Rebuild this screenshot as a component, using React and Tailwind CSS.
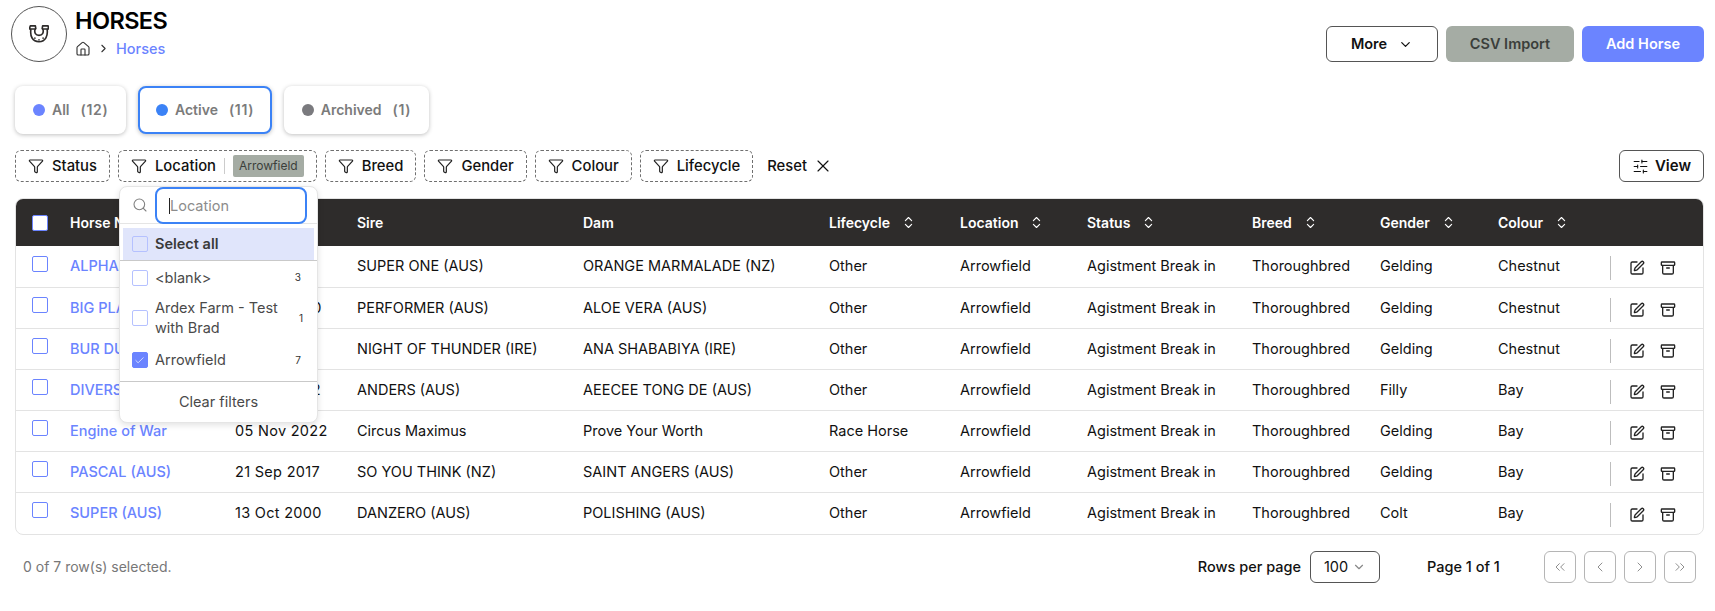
import { Archive, Check, ChevronDown, ChevronLeft, ChevronRight, ChevronsLeft, ChevronsRight, ChevronsUpDown, Funnel, House, Search, SlidersHorizontal, SquarePen, X } from 'lucide-react'

const rows = [
  ['ALPHA', '', 'SUPER ONE (AUS)', 'ORANGE MARMALADE (NZ)', 'Other', 'Gelding', 'Chestnut'],
  ['BIG PLANS', '10 Oct 2020', 'PERFORMER (AUS)', 'ALOE VERA (AUS)', 'Other', 'Gelding', 'Chestnut'],
  ['BUR DUBAI', '10 Oct 2021', 'NIGHT OF THUNDER (IRE)', 'ANA SHABABIYA (IRE)', 'Other', 'Gelding', 'Chestnut'],
  ['DIVERSE', '12 Oct 2022', 'ANDERS (AUS)', 'AEECEE TONG DE (AUS)', 'Other', 'Filly', 'Bay'],
  ['Engine of War', '05 Nov 2022', 'Circus Maximus', 'Prove Your Worth', 'Race Horse', 'Gelding', 'Bay'],
  ['PASCAL (AUS)', '21 Sep 2017', 'SO YOU THINK (NZ)', 'SAINT ANGERS (AUS)', 'Other', 'Gelding', 'Bay'],
  ['SUPER (AUS)', '13 Oct 2000', 'DANZERO (AUS)', 'POLISHING (AUS)', 'Other', 'Colt', 'Bay'],
]

function HorseshoeIcon() {
  return (
    <svg width="20" height="20" viewBox="0 0 22 22" fill="none" stroke="#2d2b2a" strokeWidth="1.8" strokeLinejoin="round">
      <path d="M1.500 2h5.500l.5 3-1 1.500c-.6 3 .5 6 4.500 6s5.100-3 4.500-6l-1-1.500.5-3H21l.5 3-1.500 1.500c.8 6-1.500 13-9 13S1.200 13 2 6.500L.5 5z" />
      <path d="M1 5.500h6M15 5.500h6" />
      <path d="M6.500 15.500v.1M11 17.500v.1M15.500 15.500v.1" strokeLinecap="round" />
    </svg>
  )
}

function FilterChip({ label, children }) {
  return (
    <div className="h-8 flex items-center gap-2 px-3 rounded-md border border-dashed border-[#6f6f6f] text-[14.8px] font-medium text-[#111] whitespace-nowrap">
      <Funnel size={16} strokeWidth={1.8} className="text-[#222]" />
      <span>{label}</span>
      {children}
    </div>
  )
}

function Tab({ dot, label, count, active }) {
  return (
    <div className={`h-12 flex items-center gap-[7px] rounded-lg bg-white shadow-[0_1px_4px_rgba(0,0,0,0.25)] text-sm font-semibold text-[#7b7b7b] ${active ? 'border-2 border-[#3b82f6] px-[15.5px]' : 'px-[18px]'}`}>
      <span className={`w-3 h-3 rounded-full ${dot}`} />
      <span>{label}</span>
      <span className="ml-1 tracking-wider">({count})</span>
    </div>
  )
}

function Box({ checked, faint }) {
  return (
    <span className={`w-4 h-4 rounded-[2px] border flex items-center justify-center shrink-0 ${checked ? 'bg-[#6b84ff] border-[#6b84ff]' : faint ? 'border-[#b5c1ff]' : 'border-[#6b84ff]'}`}>
      {checked && <Check size={11} className="text-white" strokeWidth={1.5} />}
    </span>
  )
}

function LocationMenu() {
  return (
    <div className="absolute left-[1px] top-[36px] w-[199px] h-[237px] bg-white rounded-lg border border-[#e5e5e5] shadow-[0_2px_6px_rgba(0,0,0,0.12)] z-10 text-[#4a4a4a]">
      <div className="h-[37px] flex items-center pl-[12px] pr-[10px] gap-[7px] border-b border-[#e5e5e5]">
        <Search size={16} strokeWidth={1.6} className="text-[#808080] shrink-0" />
        <div className="flex-1 h-[37px] rounded-lg border-2 border-[#3b82f6] flex items-center pl-[12px] pt-[1px] text-[#8c8c8c] bg-white"><span className="w-px h-4 bg-[#222]" />Location</div>
      </div>
      <div className="mx-[3px] mt-[4px] h-[32px] bg-[#e0e5fb] flex items-center gap-[7px] px-[9px] font-semibold text-[#3a3a3a]">
        <Box faint />
        Select all
      </div>
      <div className="border-t border-[#c9c9c9] h-[121px] flex flex-col">
        <div className="h-[33px] flex items-center gap-[7px] pl-[12px] pr-4">
          <Box faint />
          <span className="flex-1">&lt;blank&gt;</span>
          <span className="text-[10px] text-[#333]">3</span>
        </div>
        <div className="h-[48px] flex items-center gap-[7px] pl-[12px] pr-[14px]">
          <Box faint />
          <span className="flex-1 leading-5">Ardex Farm - Test with Brad</span>
          <span className="text-[10px] text-[#333]">1</span>
        </div>
        <div className="h-[36px] flex items-center gap-[7px] pl-[12px] pr-4">
          <Box checked />
          <span className="flex-1">Arrowfield</span>
          <span className="text-[10px] text-[#333]">7</span>
        </div>
      </div>
      <div className="border-t border-[#c9c9c9] h-[41px] flex items-center justify-center">Clear filters</div>
    </div>
  )
}

function SortHead({ label }) {
  return (
    <th className="text-left font-semibold text-sm p-0">
      <div className="flex items-center gap-[11px]">
        {label}
        <ChevronsUpDown size={15} strokeWidth={1.8} />
      </div>
    </th>
  )
}

function PagerButton({ children }) {
  return (
    <div className="w-8 h-8 rounded-md border border-[#b5b5b5] flex items-center justify-center text-[#8f8f8f]">
      {children}
    </div>
  )
}

export default function App() {
  return (
    <div className="w-[1715px] h-[611px] overflow-hidden bg-white pl-[15px] pr-[11px] pt-[6px] text-[14.5px] text-[#111] font-['Inter',sans-serif]">
      {/* Header */}
      <div className="flex items-start justify-between">
        <div className="flex gap-[8px] -ml-1">
          <div className="w-[56px] h-[56px] rounded-full border border-[#555] flex items-center justify-center">
            <HorseshoeIcon />
          </div>
          <div>
            <h1 className="text-[23.5px] leading-7 font-semibold text-black tracking-tight mt-[1px]">HORSES</h1>
            <div className="flex items-center gap-[6px] mt-[3px] font-medium text-[#6b84ff]">
              <House size={16} strokeWidth={1.7} className="text-[#333]" />
              <ChevronRight size={13} className="text-[#333]" />
              <span>Horses</span>
            </div>
          </div>
        </div>
        <div className="flex gap-2 mt-5 font-semibold">
          <div className="w-[112px] h-9 rounded-md border border-[#555] flex items-center justify-center gap-[11px]">
            More
            <ChevronDown size={15} />
          </div>
          <div className="w-[128px] h-9 rounded-md bg-[#a5aca4] text-[#3b3f3b] flex items-center justify-center">CSV Import</div>
          <div className="w-[122px] h-9 rounded-md bg-[#6b84ff] text-white flex items-center justify-center">Add Horse</div>
        </div>
      </div>

      {/* Tabs */}
      <div className="flex gap-3 mt-6">
        <Tab dot="bg-[#6b84ff]" label="All" count="12" />
        <Tab dot="bg-[#3b82f6]" label="Active" count="11" active />
        <Tab dot="bg-[#7a7a7e]" label="Archived" count="1" />
      </div>

      {/* Filters */}
      <div className="flex items-center justify-between mt-4">
        <div className="flex items-center gap-2">
          <FilterChip label="Status" />
          <div className="relative">
            <FilterChip label="Location">
              <span className="w-px h-4 bg-[#ccc]" />
              <span className="bg-[#a5aca4] text-[#3b3f3b] text-xs font-normal rounded-[2px] px-[6px] h-[22px] flex items-center">Arrowfield</span>
            </FilterChip>
            <LocationMenu />
          </div>
          <FilterChip label="Breed" />
          <FilterChip label="Gender" />
          <FilterChip label="Colour" />
          <FilterChip label="Lifecycle" />
          <div className="flex items-center gap-[6px] ml-[6px] text-[14.8px] font-medium">
            Reset
            <X size={20} strokeWidth={1.4} />
          </div>
        </div>
        <div className="w-[85px] h-8 rounded-md border border-[#555] flex items-center justify-center gap-[6px] text-[15px] font-semibold">
          <SlidersHorizontal size={17} strokeWidth={1.5} />
          View
        </div>
      </div>

      {/* Table */}
      <div className="w-[1689px] h-[337px] mt-[16px] rounded-lg border border-[#e3e3e3] overflow-hidden">
        <table className="w-full table-fixed border-collapse">
          <colgroup>
            <col className="w-[54px]" />
            <col className="w-[165px]" />
            <col className="w-[122px]" />
            <col className="w-[226px]" />
            <col className="w-[246px]" />
            <col className="w-[131px]" />
            <col className="w-[127px]" />
            <col className="w-[165px]" />
            <col className="w-[128px]" />
            <col className="w-[118px]" />
            <col className="w-[112px]" />
            <col />
          </colgroup>
          <thead>
            <tr className="h-[47px] bg-[#2e2c2b] text-white">
              <th className="p-0 pl-4 text-left">
                <span className="block w-4 h-4 rounded-[2px] bg-white border border-[#6b84ff]" />
              </th>
              <th className="p-0 text-left font-semibold text-sm">Horse Name</th>
              <th className="p-0 text-left font-semibold text-sm">DOB</th>
              <th className="p-0 text-left font-semibold text-sm">Sire</th>
              <th className="p-0 text-left font-semibold text-sm">Dam</th>
              <SortHead label="Lifecycle" />
              <SortHead label="Location" />
              <SortHead label="Status" />
              <SortHead label="Breed" />
              <SortHead label="Gender" />
              <SortHead label="Colour" />
              <th className="p-0" />
            </tr>
          </thead>
          <tbody>
            {rows.map((r) => (
              <tr key={r[0]} className="h-[41px] border-b border-[#e3e3e3] last:border-b-0">
                <td className="p-0 pl-4"><span className="block -mt-[5px]"><Box /></span></td>
                <td className="p-0 font-medium text-[#6b84ff] whitespace-nowrap">{r[0]}</td>
                <td className="p-0 whitespace-nowrap tracking-[0.3px]">{r[1]}</td>
                <td className="p-0 whitespace-nowrap">{r[2]}</td>
                <td className="p-0 whitespace-nowrap">{r[3]}</td>
                <td className="p-0">{r[4]}</td>
                <td className="p-0">Arrowfield</td>
                <td className="p-0 whitespace-nowrap">Agistment Break in</td>
                <td className="p-0">Thoroughbred</td>
                <td className="p-0">{r[5]}</td>
                <td className="p-0">{r[6]}</td>
                <td className="p-0">
                  <div className="flex items-center h-6 mt-1 border-l border-[#bdbdbd] pl-[18px] gap-[15px] text-[#222]">
                    <SquarePen size={16} strokeWidth={2} />
                    <Archive size={16} strokeWidth={2} />
                  </div>
                </td>
              </tr>
            ))}
          </tbody>
        </table>
      </div>

      {/* Footer */}
      <div className="flex items-center justify-between mt-4 pl-2 pr-2">
        <span className="text-sm text-[#777]">0 of 7 row(s) selected.</span>
        <div className="flex items-center font-medium">
          <span>Rows per page</span>
          <div className="ml-[9px] w-[70px] h-8 rounded-md border border-[#555] flex items-center justify-center gap-1 font-normal">
            100
            <ChevronDown size={14} className="text-[#888]" />
          </div>
          <span className="ml-[47px] w-[117px]">Page 1 of 1</span>
          <div className="flex gap-2">
            <PagerButton><ChevronsLeft size={16} strokeWidth={1.5} /></PagerButton>
            <PagerButton><ChevronLeft size={16} strokeWidth={1.5} /></PagerButton>
            <PagerButton><ChevronRight size={16} strokeWidth={1.5} /></PagerButton>
            <PagerButton><ChevronsRight size={16} strokeWidth={1.5} /></PagerButton>
          </div>
        </div>
      </div>
    </div>
  )
}
